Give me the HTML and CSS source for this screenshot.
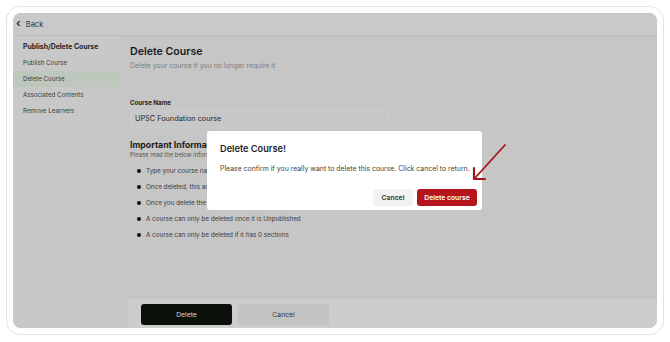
FILE: index.html
```html
<!DOCTYPE html>
<html lang="en">
<head>
<meta charset="utf-8">
<title>Delete Course</title>
<link rel="stylesheet" href="styles.css">
</head>
<body>
<div class="frame">
  <div class="app">
    <header class="topbar">
      <span class="chev">&#8249;</span><span class="back">Back</span>
    </header>
    <div class="body">
      <aside class="sidebar">
        <div class="side-title">Publish/Delete Course</div>
        <div class="side-item">Publish Course</div>
        <div class="side-item active">Delete Course</div>
        <div class="side-item">Associated Contents</div>
        <div class="side-item">Remove Learners</div>
      </aside>
      <main class="main">
        <div class="content">
          <h1 class="title">Delete Course</h1>
          <p class="subtitle">Delete your course if you no longer require it</p>
          <label class="label">Course Name</label>
          <div class="input">UPSC Foundation course</div>
          <h2 class="info-title">Important Information</h2>
          <p class="info-sub">Please read the below information carefully</p>
          <ul class="bullets">
            <li>Type your course name to confirm the deletion</li>
            <li>Once deleted, this action cannot be undone</li>
            <li>Once you delete the course, all its data will be lost</li>
            <li>A course can only be deleted once it is Unpublished</li>
            <li>A course can only be deleted if it has 0 sections</li>
          </ul>
        </div>
        <footer class="footer">
          <button class="btn-dark">Delete</button>
          <button class="btn-grey">Cancel</button>
        </footer>
      </main>
    </div>
    <div class="modal">
      <div class="modal-title">Delete Course!</div>
      <div class="modal-text">Please confirm if you really want to delete this course. Click cancel to return.</div>
      <div class="modal-actions">
        <button class="m-cancel">Cancel</button>
        <button class="m-delete">Delete course</button>
      </div>
    </div>
    <svg class="arrow" width="40" height="42" viewBox="0 0 40 42">
      <line x1="35" y1="3" x2="5" y2="36" stroke="#a3161c" stroke-width="1.8" stroke-linecap="round"/>
      <polyline points="4,26 4,37 15,37" fill="none" stroke="#a3161c" stroke-width="2.2" stroke-linecap="round" stroke-linejoin="round"/>
    </svg>
  </div>
</div>
</body>
</html>
```

FILE: styles.css
```css
* { box-sizing: border-box; }
html, body { margin: 0; padding: 0; background: #ffffff; }
body {
  font-family: Inter, "Noto Sans", "Liberation Sans", sans-serif;
  color: #2a2a2a;
}
.frame {
  margin: 6px 0 0 6px;
  width: 658px;
  height: 329px;
  border: 1px solid #e4e4e9;
  border-radius: 14px;
  padding: 6px;
}
.app {
  position: relative;
  width: 100%;
  height: 100%;
  background: #c6c6c6;
  border-radius: 8px;
  overflow: hidden;
  display: flex;
  flex-direction: column;
}
.topbar {
  height: 23px;
  flex: none;
  background: #c9c9c9;
  border-bottom: 1px solid #bcbcbc;
  display: flex;
  align-items: center;
  padding-left: 3px;
  font-size: 7.5px;
  color: #333;
}
.chev { font-size: 11px; font-weight: 700; margin-right: 5px; line-height: 1; position: relative; top: -1px; }
.body { flex: 1; display: flex; min-height: 0; }
.sidebar {
  width: 107px;
  flex: none;
  background: #c8c8c8;
  padding-top: 3px;
}
.side-title {
  font-size: 6.9px;
  font-weight: 700;
  color: #1e1e1e;
  padding: 0 0 0 10px;
  height: 16px;
  line-height: 16px;
}
.side-item {
  font-size: 6.2px;
  color: #3a3a3a;
  height: 16px;
  line-height: 16px;
  padding-left: 10px;
}
.side-item.active { background: #bec7bb; }
.main {
  flex: 1;
  display: flex;
  flex-direction: column;
  min-width: 0;
}
.content {
  flex: 1;
  padding: 8px 0 0 10px;
}
.title {
  margin: 0;
  font-size: 10.6px;
  font-weight: 600;
  color: #1c1c1c;
  height: 15px;
  line-height: 15px;
}
.subtitle {
  margin: 2px 0 0;
  font-size: 6.9px;
  color: #7c7c7c;
  line-height: 9px;
}
.label {
  display: block;
  margin-top: 28px;
  font-size: 6.2px;
  font-weight: 700;
  color: #222;
  line-height: 9px;
}
.input {
  margin-top: 3px;
  width: 259px;
  height: 18px;
  border: 1px solid #cbcbcb;
  background: #c7c7c7;
  border-radius: 2px;
  font-size: 7.3px;
  color: #2a2a2a;
  line-height: 16px;
  padding-left: 4px;
}
.info-title {
  margin: 11px 0 0;
  font-size: 8.7px;
  font-weight: 700;
  color: #1c1c1c;
  line-height: 12px;
}
.info-sub {
  margin: 0;
  font-size: 5.9px;
  color: #555;
  line-height: 7px;
}
.bullets {
  list-style: none;
  margin: 5px 0 0;
  padding: 0 0 0 7px;
}
.bullets li {
  position: relative;
  font-size: 6.3px;
  color: #3a3a3a;
  height: 16px;
  line-height: 16px;
  padding-left: 9px;
}
.bullets li::before {
  content: "";
  position: absolute;
  left: 0;
  top: 6px;
  width: 4px;
  height: 4px;
  border-radius: 50%;
  background: #111;
}
.footer {
  margin-left: 8px;
  height: 29px;
  flex: none;
  background: #cdcdcd;
  display: flex;
  align-items: flex-start;
  padding: 5px 0 0 13px;
  gap: 6px;
}
.footer button {
  font-family: inherit;
  border: 0;
  width: 91px;
  height: 21px;
  font-size: 6.8px;
  border-radius: 3px;
}
.btn-dark { background: #0b100b; color: #d9d9d9; }
.btn-grey { background: #c3c3c3; color: #333; }
.modal {
  position: absolute;
  left: 194px;
  top: 118px;
  width: 275px;
  height: 79px;
  background: #ffffff;
  border-radius: 3px;
  padding: 12px 5px 0 13px;
}
.modal-title {
  font-size: 9.2px;
  font-weight: 600;
  color: #1c1c28;
  line-height: 12px;
}
.modal-text {
  margin-top: 9px;
  font-size: 6.9px;
  color: #444;
  line-height: 9px;
  white-space: nowrap;
}
.modal-actions {
  margin-top: 16px;
  display: flex;
  justify-content: flex-end;
  gap: 4px;
}
.modal-actions button {
  font-family: inherit;
  border: 0;
  height: 17px;
  border-radius: 3px;
  font-size: 6.8px;
  font-weight: 600;
  padding: 0;
}
.m-cancel { width: 40px; background: #f2f2f2; color: #333; }
.m-delete { width: 60px; background: #b4141b; color: #ffffff; }
.arrow {
  position: absolute;
  left: 457px;
  top: 129px;
}
```
